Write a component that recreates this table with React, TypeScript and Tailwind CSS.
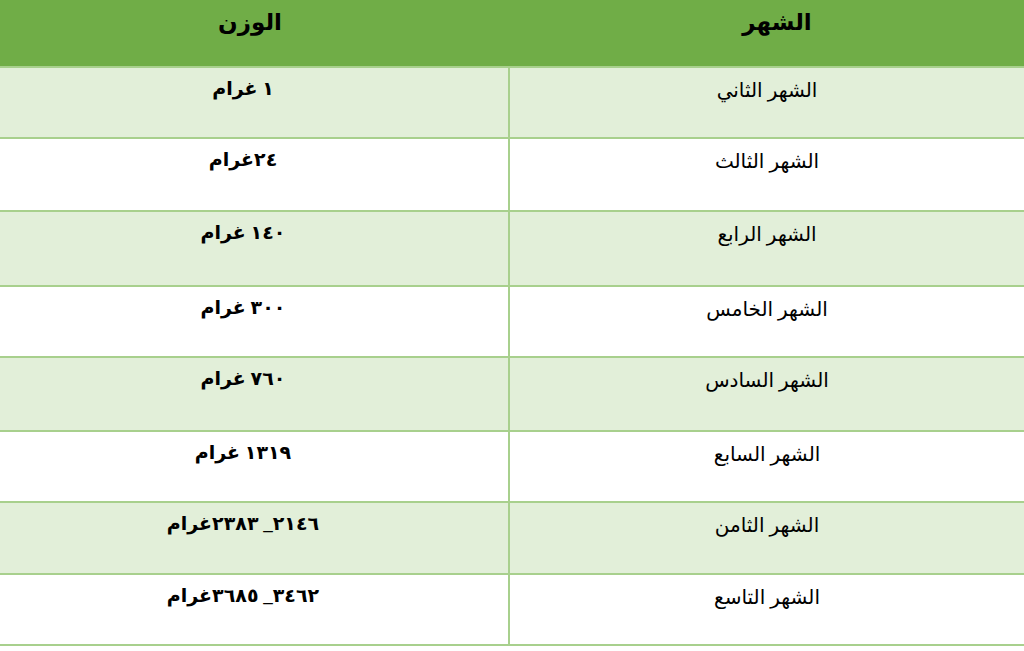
import React from 'react';

const rows = [
  { month: 'الشهر الثاني', weight: '١ غرام', h: 'h-[71px]', tint: true },
  { month: 'الشهر الثالث', weight: '٢٤غرام', h: 'h-[73px]', tint: false },
  { month: 'الشهر الرابع', weight: '١٤٠ غرام', h: 'h-[75px]', tint: true },
  { month: 'الشهر الخامس', weight: '٣٠٠ غرام', h: 'h-[71px]', tint: false },
  { month: 'الشهر السادس', weight: '٧٦٠ غرام', h: 'h-[74px]', tint: true },
  { month: 'الشهر السابع', weight: '١٣١٩ غرام', h: 'h-[71px]', tint: false },
  { month: 'الشهر الثامن', weight: '٢١٤٦_ ٢٣٨٣غرام', h: 'h-[72px]', tint: true },
  { month: 'الشهر التاسع', weight: '٣٤٦٢_ ٣٦٨٥غرام', h: 'h-[71px]', tint: false },
];

export default function App() {
  return (
    <div
      dir="rtl"
      className="w-[1024px] h-[651px] bg-white overflow-hidden text-black"
      style={{ fontFamily: '"Liberation Serif", "DejaVu Sans", serif' }}
    >
      {/* Header */}
      <div className="flex h-[66px] bg-[#70ad47]">
        <div className="w-[516px] flex justify-center pt-[6px] pl-[22px] text-[23px] font-bold">الشهر</div>
        <div className="flex-1 flex justify-center pt-[6px] pr-[8px] text-[23px] font-bold">الوزن</div>
      </div>

      {rows.map((r, i) => (
        <div
          key={i}
          className={`flex ${r.h} border-t-2 border-[#a8d08d] ${r.tint ? 'bg-[#e2efd9]' : 'bg-white'}`}
        >
          <div className="w-[516px] border-l-2 border-[#a8d08d] flex justify-center pt-[7px] text-[20px]">
            {r.month}
          </div>
          <div className="flex-1 flex justify-center pt-[7px] pr-[22px] text-[19px] font-bold">
            {r.weight}
          </div>
        </div>
      ))}
      <div className="border-t-2 border-[#a8d08d]" />
    </div>
  );
}
